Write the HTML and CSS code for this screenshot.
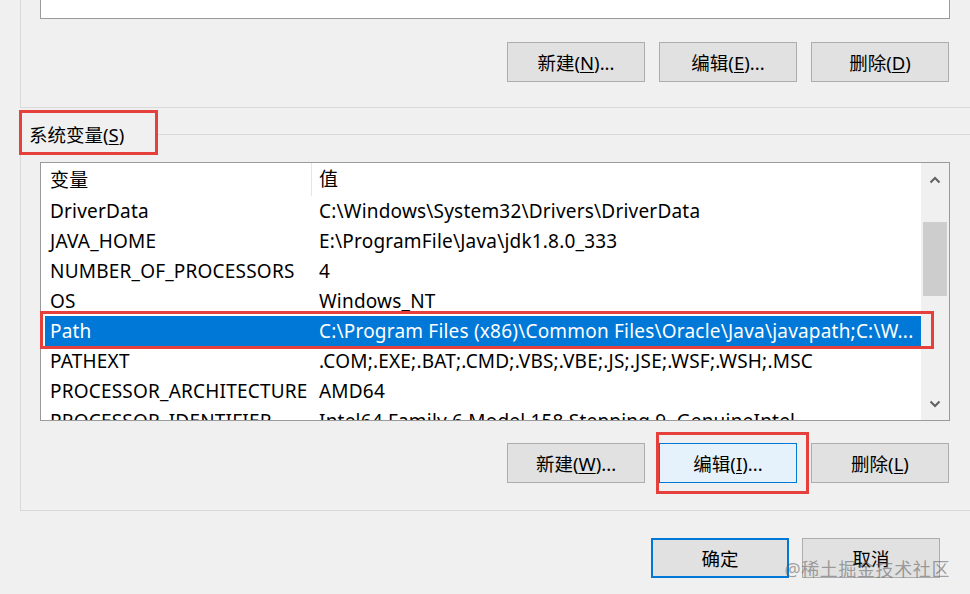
FILE: index.html
```html
<!DOCTYPE html>
<html lang="zh-CN">
<head>
<meta charset="utf-8">
<title>环境变量</title>
<link rel="stylesheet" href="styles.css">
</head>
<body>
<div class="dialog">
  <section class="group group-user">
    <div class="list list-stub"></div>
    <div class="btn-row">
      <button class="btn">新建(<u>N</u>)...</button>
      <button class="btn">编辑(<u>E</u>)...</button>
      <button class="btn">删除(<u>D</u>)</button>
    </div>
  </section>

  <section class="group group-sys">
    <div class="group-label"><span>系统变量(<u>S</u>)</span></div>
    <div class="list list-sys">
      <div class="list-body">
        <div class="list-head">
          <div class="col col-name">变量</div>
          <div class="col col-val">值</div>
        </div>
        <div class="row"><div class="col col-name">DriverData</div><div class="col col-val">C:\Windows\System32\Drivers\DriverData</div></div>
        <div class="row"><div class="col col-name">JAVA_HOME</div><div class="col col-val">E:\ProgramFile\Java\jdk1.8.0_333</div></div>
        <div class="row"><div class="col col-name">NUMBER_OF_PROCESSORS</div><div class="col col-val">4</div></div>
        <div class="row"><div class="col col-name">OS</div><div class="col col-val">Windows_NT</div></div>
        <div class="row row-selected"><div class="col col-name">Path</div><div class="col col-val">C:\Program Files (x86)\Common Files\Oracle\Java\javapath;C:\W...</div><div class="mark mark-row"></div></div>
        <div class="row"><div class="col col-name">PATHEXT</div><div class="col col-val">.COM;.EXE;.BAT;.CMD;.VBS;.VBE;.JS;.JSE;.WSF;.WSH;.MSC</div></div>
        <div class="row"><div class="col col-name">PROCESSOR_ARCHITECTURE</div><div class="col col-val">AMD64</div></div>
        <div class="row"><div class="col col-name">PROCESSOR_IDENTIFIER</div><div class="col col-val">Intel64 Family 6 Model 158 Stepping 9, GenuineIntel</div></div>
      </div>
      <div class="scrollbar">
        <div class="sb-arrow">
          <svg width="12" height="8" viewBox="0 0 12 8"><path d="M1.5 6.5 L6 2 L10.5 6.5" fill="none" stroke="#606060" stroke-width="2"/></svg>
        </div>
        <div class="sb-track"><div class="sb-thumb"></div></div>
        <div class="sb-arrow">
          <svg width="12" height="8" viewBox="0 0 12 8"><path d="M1.5 1.5 L6 6 L10.5 1.5" fill="none" stroke="#606060" stroke-width="2"/></svg>
        </div>
      </div>
    </div>
    <div class="btn-row">
      <button class="btn">新建(<u>W</u>)...</button>
      <div class="mark-wrap">
        <button class="btn btn-hot">编辑(<u>I</u>)...</button>
        <div class="mark mark-btn"></div>
      </div>
      <button class="btn">删除(<u>L</u>)</button>
    </div>
  </section>

  <div class="footer">
    <button class="btn btn-default">确定</button>
    <button class="btn">取消</button>
    <div class="watermark">@稀土掘金技术社区</div>
  </div>
</div>
</body>
</html>
```
FILE: styles.css
```css
html, body {
  margin: 0;
  padding: 0;
}
body {
  width: 970px;
  height: 594px;
  overflow: hidden;
  background: #f0f0f0;
  font-family: "Noto Sans", "Noto Sans CJK SC", sans-serif;
  font-size: 19px;
  color: #000;
}
u { text-decoration: underline; text-underline-offset: 2px; text-decoration-thickness: 1px; }

.dialog {
  position: relative;
  width: 970px;
  height: 594px;
}

.group {
  margin-left: 20px;
  width: 980px;
  border-left: 1px solid #d9d9d9;
  border-bottom: 1px solid #d9d9d9;
  box-sizing: border-box;
}

.group-user {
  height: 108px;
  padding-left: 19px;
}

.list {
  width: 910px;
  box-sizing: border-box;
  border: 1px solid #9a9a9a;
  background: #fff;
}
.list-stub {
  height: 19px;
  border-top: none;
}

.btn-row {
  display: flex;
  gap: 14px;
  margin-top: 23px;
}
.group-user .btn-row { margin-left: 467px; }
.group-sys .btn-row { margin-left: 486px; margin-top: 22px; }

.btn {
  width: 138px;
  height: 40px;
  box-sizing: border-box;
  border: 1px solid #adadad;
  background: #e1e1e1;
  font-family: inherit;
  font-size: 18.5px;
  color: #000;
  padding: 0;
  margin: 0;
}
.btn-hot {
  border-color: #0078d7;
  background: #e5f1fb;
}
.btn-default {
  border: 2px solid #0078d7;
}

.group-sys {
  margin-top: 26px;
  border-top: 1px solid #d9d9d9;
  height: 377px;
}

.group-label {
  position: relative;
  margin-top: -25px;
  margin-left: -2px;
  width: 139px;
  height: 45px;
  box-sizing: border-box;
  border: 3px solid #e5403b;
  background: #f0f0f0;
  display: flex;
  align-items: center;
  padding-left: 7px;
  padding-top: 2px;
  font-size: 18.5px;
}

.list-sys {
  margin-top: 7px;
  margin-left: 19px;
  height: 259px;
  display: flex;
}

.list-body {
  flex: 1;
  min-width: 0;
  padding-left: 4px;
  overflow-x: visible;
  overflow-y: clip;
  letter-spacing: 0.2px;
}

.list-head, .row {
  display: flex;
  white-space: nowrap;
  position: relative;
}
.list-head {
  height: 33px;
  align-items: center;
}
.list-head .col-name {
  border-right: 1px solid #e5e5e5;
  height: 33px;
  line-height: 35px;
}
.list-head .col-val {
  line-height: 35px;
}
.row {
  height: 30px;
  line-height: 30px;
}
.col-name {
  width: 267px;
  flex: none;
  padding-left: 5px;
  box-sizing: border-box;
}
.col-val {
  padding-left: 7px;
  flex: 1;
  min-width: 0;
  overflow: hidden;
}
.row-selected {
  background: #0078d7;
  color: #fff;
}

.mark {
  position: absolute;
  border: 3px solid #e5403b;
  pointer-events: none;
}
.mark-row {
  left: -5px;
  top: -5px;
  right: -13px;
  bottom: -3px;
}
.mark-wrap {
  position: relative;
}
.mark-btn {
  left: -3px;
  right: -12px;
  top: -11px;
  bottom: -11px;
}

.scrollbar {
  width: 28px;
  flex: none;
  background: #f0f0f0;
  display: flex;
  flex-direction: column;
}
.sb-arrow {
  height: 33px;
  display: flex;
  align-items: center;
  justify-content: center;
}
.sb-track {
  flex: 1;
  padding: 26px 2px 0 2px;
}
.sb-thumb {
  height: 74px;
  background: #cdcdcd;
}

.footer {
  display: flex;
  justify-content: flex-end;
  gap: 13px;
  margin-top: 27px;
  padding-right: 30px;
  position: relative;
}
.watermark {
  position: absolute;
  right: 20px;
  top: 17px;
  font-size: 18px;
  color: rgba(90, 90, 90, 0.55);
  letter-spacing: 0.6px;
  pointer-events: none;
}
```
